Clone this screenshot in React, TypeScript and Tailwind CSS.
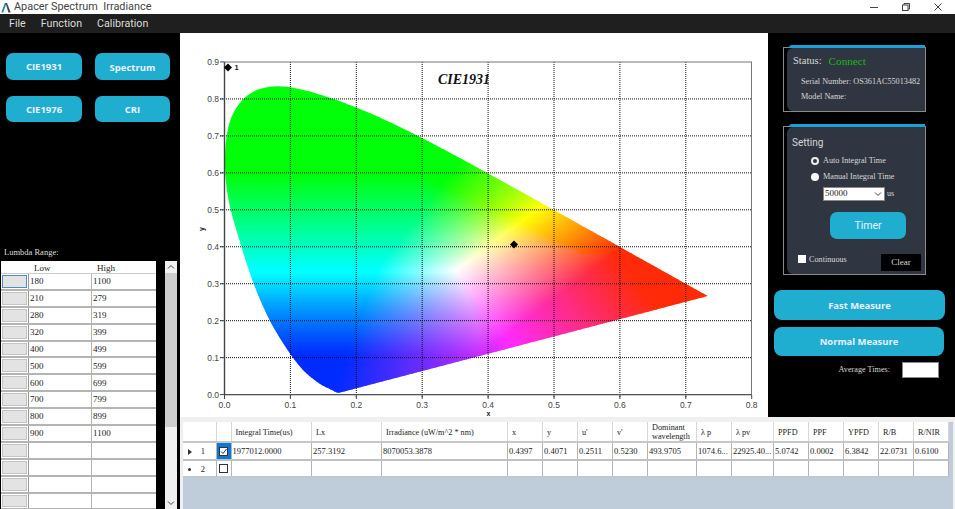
import React, { useMemo } from 'react';

const KNOTS: [number, number][] = [
  [0.1741, 0.005], [0.1714, 0.0051], [0.1644, 0.0109], [0.1566, 0.0177], [0.144, 0.0297],
  [0.1241, 0.0578], [0.1096, 0.0868], [0.0913, 0.1327], [0.0687, 0.2007], [0.0454, 0.295], [0.0235, 0.4127],
  [0.005, 0.5384], [0.001, 0.6548], [0.0105, 0.7502], [0.0369, 0.812], [0.0743, 0.8338], [0.1142, 0.8262],
  [0.1547, 0.8059], [0.1929, 0.7816], [0.2296, 0.7543], [0.2658, 0.7243], [0.3016, 0.6923], [0.3373, 0.6589],
  [0.3731, 0.6245], [0.4087, 0.5896], [0.4441, 0.5547], [0.4788, 0.5202], [0.5125, 0.4866], [0.5448, 0.4544],
  [0.5752, 0.4242], [0.6029, 0.3965], [0.627, 0.3725], [0.6658, 0.334], [0.6915, 0.3083], [0.7079, 0.292],
  [0.719, 0.2809], [0.726, 0.274], [0.7334, 0.2666],
];

// catmull-rom through the spectral locus so the edge has no corners
const smooth = (pts: [number, number][]) => {
  const out: [number, number][] = [];
  for (let i = 0; i < pts.length - 1; i++) {
    const p0 = pts[Math.max(i - 1, 0)];
    const p1 = pts[i];
    const p2 = pts[i + 1];
    const p3 = pts[Math.min(i + 2, pts.length - 1)];
    for (let k = 0; k < 6; k++) {
      const t = k / 6;
      const f = (a: number, b: number, c: number, d: number) =>
        0.5 * (2 * b + (c - a) * t + (2 * a - 5 * b + 4 * c - d) * t * t + (3 * b - a - 3 * c + d) * t * t * t);
      out.push([f(p0[0], p1[0], p2[0], p3[0]), f(p0[1], p1[1], p2[1], p3[1])]);
    }
  }
  out.push(pts[pts.length - 1]);
  return out;
};

const LOCUS = smooth(KNOTS);

// plot coordinates inside the chart svg
const px = (x: number) => 44.5 + x * 659;
const py = (y: number) => 361.6 - y * 369.6;

const clamp = (v: number, lo = 0, hi = 1) => Math.min(hi, Math.max(lo, v));

// colour fitted by eye against the chart: white near (0.352, 0.337), bands to cyan, yellow and magenta
const xyToColor = (x: number, y: number) => {
  const dx = x - 0.352;
  const dy = y - 0.337;

  const x0 = y < 0.337 ? 0.17 + (y - 0.03) * 0.2 : 0.231 + dy * 0.42;
  const x1 = y < 0.337 ? 0.352 - dy * 0.41 : 0.352 + dy * 0.75;
  const r = clamp((x - x0) / (x1 - x0));

  const gy = y < 0.33 ? Math.pow(clamp((y - 0.03) / 0.3), 1.3) : 1;
  const gp = 1 - (dx * 0.8 - dy * 0.6) * 5;
  const g = clamp(Math.min(gy, gp), 0.17);

  const h = Math.max(0.05, x > 0.3 ? 0.27 - (x - 0.3) * 0.9 : 0.27);
  const bUp = y > 0.337 ? 1 - dy / h : 1;
  const bRight = 1 - (dx * 0.926 + dy * 0.377) / 0.25;
  const b = clamp(Math.min(bUp, bRight), 0.03);

  return `rgb(${Math.round(r * 255)},${Math.round(g * 255)},${Math.round(b * 255)})`;
};

const inside = (x: number, y: number) => {
  let hit = false;
  for (let i = 0, j = LOCUS.length - 1; i < LOCUS.length; j = i++) {
    const [xi, yi] = LOCUS[i];
    const [xj, yj] = LOCUS[j];
    if (yi > y !== yj > y && x < ((xj - xi) * (y - yi)) / (yj - yi) + xi) hit = !hit;
  }
  return hit;
};

const Gamut = () => {
  const cells = useMemo(() => {
    const out: { x: number; y: number; w: number; fill: string }[] = [];
    const step = 2;
    for (let sy = 50; sy < 364; sy += step) {
      let run: { x: number; y: number; w: number; fill: string } | null = null;
      for (let sx = 44; sx < 536; sx += step) {
        const x = (sx + 1 - 44.5) / 659;
        const y = (361.6 - sy - 1) / 369.6;
        const near =
          inside(x, y) || inside(x + 0.005, y) || inside(x - 0.005, y) || inside(x, y + 0.006) || inside(x, y - 0.006);
        if (!near) {
          run = null;
          continue;
        }
        const fill = xyToColor(x, y);
        if (run && run.fill === fill) {
          run.w += step;
        } else {
          run = { x: sx, y: sy, w: step, fill };
          out.push(run);
        }
      }
    }
    return out;
  }, []);

  return (
    <g clipPath="url(#locus)">
      {cells.map((c, i) => (
        <rect key={i} x={c.x} y={c.y} width={c.w + 0.5} height={2.5} fill={c.fill} />
      ))}
    </g>
  );
};

const Diamond = ({ x, y }: { x: number; y: number }) => (
  <polygon points={`${x},${y - 4} ${x + 4},${y} ${x},${y + 4} ${x - 4},${y}`} fill="#000" />
);

const Chart = () => {
  const locus = LOCUS.map(([x, y]) => `${px(x)},${py(y)}`).join(' ');
  const xs = [0, 1, 2, 3, 4, 5, 6, 7, 8];
  const ys = [0, 1, 2, 3, 4, 5, 6, 7, 8, 9];
  return (
    <svg width="588" height="384" viewBox="0 0 588 384" className="block">
      <defs>
        <clipPath id="locus">
          <polygon points={locus} />
        </clipPath>
      </defs>
      <Gamut />
      {xs.slice(1, 8).map((i) => (
        <line key={i} x1={px(i / 10)} x2={px(i / 10)} y1={29} y2={365} stroke="#111" strokeDasharray="1 1" />
      ))}
      {ys.slice(1, 9).map((i) => (
        <line key={i} x1={40} x2={571} y1={py(i / 10)} y2={py(i / 10)} stroke="#111" strokeDasharray="1 1" />
      ))}
      <rect x={44.5} y={29} width={527} height={332.6} fill="none" stroke="#777" />
      <line x1={44.5} x2={44.5} y1={29} y2={362} stroke="#444" strokeWidth={1.4} />
      <line x1={44.5} x2={571.5} y1={361.6} y2={361.6} stroke="#555" strokeWidth={1.2} />
      {ys.map((i) => (
        <g key={i}>
          <line x1={40} x2={44} y1={py(i / 10)} y2={py(i / 10)} stroke="#444" />
          <text x={39} y={py(i / 10) + 3} textAnchor="end" fontSize="8.5" fill="#444" fontFamily="Liberation Sans, sans-serif">
            {(i / 10).toFixed(1)}
          </text>
        </g>
      ))}
      {xs.map((i) => (
        <g key={i}>
          <line x1={px(i / 10)} x2={px(i / 10)} y1={362} y2={366} stroke="#444" />
          <text x={px(i / 10)} y={375} textAnchor="middle" fontSize="8.5" fill="#444" fontFamily="Liberation Sans, sans-serif">
            {(i / 10).toFixed(1)}
          </text>
        </g>
      ))}
      <text
        transform="translate(24 196) rotate(-90)"
        textAnchor="middle"
        fontSize="7"
        fontWeight="700"
        fill="#222"
        fontFamily="Liberation Sans, sans-serif"
      >
        y
      </text>
      <text x={308.5} y={383} textAnchor="middle" fontSize="7" fontWeight="700" fill="#222" fontFamily="Liberation Sans, sans-serif">
        x
      </text>
      <text
        x={258}
        y={51}
        fontSize="14"
        fontWeight="700"
        fontStyle="italic"
        fill="#111"
        fontFamily="Liberation Serif, serif"
      >
        CIE1931
      </text>
      <Diamond x={48} y={34.5} />
      <text x={54.5} y={37} fontSize="7.5" fontWeight="700" fill="#222" fontFamily="Liberation Sans, sans-serif">
        1
      </text>
      <Diamond x={334} y={211.5} />
    </svg>
  );
};

const TitleBar = () => (
  <div className="flex h-[14px] items-center bg-white pl-[1px] text-[#444]">
    <svg width="10" height="11" viewBox="0 0 10 11">
      <path d="M0.3 10.5 L3.8 1 L5.6 1 L2.2 10.5 Z" fill="#2b8c96" />
      <path d="M4.6 1 L6 1 L9.7 10.5 L7.4 10.5 Z" fill="#33484f" />
    </svg>
    <span className="ml-[3px] whitespace-pre font-['Roboto',sans-serif] text-[10.9px] leading-none">
      Apacer Spectrum  Irradiance
    </span>
    <div className="ml-auto flex items-center gap-[24px] pr-[13px]">
      <svg width="8" height="8" viewBox="0 0 8 8">
        <line x1="0" x2="8" y1="4.5" y2="4.5" stroke="#444" />
      </svg>
      <svg width="8" height="8" viewBox="0 0 8 8" fill="none" stroke="#444">
        <rect x="0.5" y="2" width="5.5" height="5.5" />
        <path d="M2 2 V0.5 H7.5 V6 H6" />
      </svg>
      <svg width="8" height="8" viewBox="0 0 8 8" stroke="#444">
        <line x1="0.5" y1="0.5" x2="7.5" y2="7.5" />
        <line x1="7.5" y1="0.5" x2="0.5" y2="7.5" />
      </svg>
    </div>
  </div>
);

const MenuBar = () => (
  <div className="flex h-[19px] items-center gap-[15px] bg-[#1f1f1f] pl-[9px] pt-[1px] font-['Roboto',sans-serif] text-[10.7px] text-[#dcdcdc]">
    <span>File</span>
    <span>Function</span>
    <span>Calibration</span>
  </div>
);

const RANGES = [
  ['180', '1100'], ['210', '279'], ['280', '319'], ['320', '399'], ['400', '499'], ['500', '599'], ['600', '699'],
  ['700', '799'], ['800', '899'], ['900', '1100'], ['', ''], ['', ''], ['', ''], ['', ''], ['', ''],
];

const LeftPanel = () => (
  <div className="flex h-full w-[180px] flex-col bg-black">
    <div className="grid grid-cols-[76px_75px] grid-rows-[27px_26px] gap-x-[13px] gap-y-[16px] pl-[6px] pt-[20px] font-['Open_Sans',sans-serif] text-[9.5px] font-bold text-[#eef]">
      <button className="rounded-[7px] bg-[#20aed0] pt-[2px]">CIE1931</button>
      <button className="rounded-[7px] bg-[#20aed0] pt-[3px]">Spectrum</button>
      <button className="rounded-[7px] bg-[#20aed0] pt-[2px]">CIE1976</button>
      <button className="rounded-[7px] bg-[#20aed0] pt-[2px]">CRI</button>
    </div>
    <div className="mt-[125px] pl-[4px] font-['Liberation_Serif',serif] text-[8.5px] leading-[10px] text-[#ddd]">Lumbda Range:</div>
    <div className="ml-[1px] mt-[4px] flex min-h-0 flex-1 overflow-hidden">
      <div className="w-[155px] overflow-hidden bg-white font-['Liberation_Serif',serif] text-[9px] text-[#222]">
        <div className="grid h-[13px] grid-cols-[28px_63px_63px] items-center border-b border-[#ccc] pt-[1px]">
          <span />
          <span className="pl-[5px]">Low</span>
          <span className="pl-[5px]">High</span>
        </div>
        {RANGES.map((r, i) => (
          <div key={i} className="grid h-[16.9px] grid-cols-[28px_63px_63px] border-b-2 border-[#b4b4b4]">
            <span className="flex border-r border-[#999] bg-white p-[1px]">
              <span className={i === 0 ? 'flex-1 border border-[#4a8fc8] bg-[#e3e3e3]' : 'flex-1 border border-[#c4c4c4] bg-[#e3e3e3]'} />
            </span>
            <span className="flex items-center border-r border-[#b4b4b4] pl-[1px] pt-[1px]">{r[0]}</span>
            <span className="flex items-center pl-[1px] pt-[1px]">{r[1]}</span>
          </div>
        ))}
      </div>
      <div className="ml-[9px] flex h-full w-[12px] flex-col items-center bg-[#f0f0f0]">
        <svg className="my-[3px] shrink-0" width="8" height="6" viewBox="0 0 8 6" fill="none" stroke="#444">
          <path d="M1 4.5 L4 1.5 L7 4.5" />
        </svg>
        <div className="h-[154px] w-full bg-[#cdcdcd]" />
        <svg className="mb-[3px] mt-auto shrink-0" width="8" height="6" viewBox="0 0 8 6" fill="none" stroke="#444">
          <path d="M1 1.5 L4 4.5 L7 1.5" />
        </svg>
      </div>
    </div>
  </div>
);

const RightPanel = () => (
  <div className="flex h-full w-[187px] flex-col bg-black font-['Liberation_Serif',serif] text-[#d8d8d8]">
    <div className="ml-[15px] mt-[14px] h-[65px] w-[143px] border border-[#8a8a8a]">
      <div className="ml-[5px] -mt-[3px] h-[3px] rounded-tl-[3px] bg-[#1a9fd8]" />
      <div className="ml-[3px] h-[63px] rounded-l-[6px] bg-[#2f3641] pl-[6px] pt-[6px]">
        <div className="flex h-[14px] items-center text-[10.5px]">
          <span>Status:</span>
          <span className="ml-[7px] text-[11.2px] text-[#16b816]">Connect</span>
        </div>
        <div className="ml-[8px] mt-[8px] whitespace-nowrap text-[8.2px] leading-[11px]">Serial Number: OS361AC55013482</div>
        <div className="ml-[8px] mt-[4px] text-[8.2px] leading-[11px]">Model Name:</div>
      </div>
    </div>
    <div className="ml-[15px] mt-[14px] h-[149px] w-[143px] border border-[#8a8a8a]">
      <div className="ml-[5px] -mt-[3px] h-[3px] rounded-tl-[3px] bg-[#1a9fd8]" />
      <div className="ml-[3px] h-[147px] rounded-l-[6px] bg-[#2f3641] pt-[9px]">
        <div className="pl-[5px] font-['Roboto',sans-serif] text-[10px] leading-[13px]">Setting</div>
        <div className="ml-[24px] mt-[6px] flex h-[12px] items-center text-[8.2px]">
          <span className="h-[8px] w-[8px] rounded-full border-2 border-[#eee] bg-[#2f3641]" />
          <span className="ml-[4px]">Auto Integral Time</span>
        </div>
        <div className="ml-[24px] mt-[4px] flex h-[12px] items-center text-[8.2px]">
          <span className="h-[8px] w-[8px] rounded-full bg-white" />
          <span className="ml-[4px]">Manual Integral Time</span>
        </div>
        <div className="ml-[36px] mt-[4px] flex h-[14px] items-center">
          <div className="flex h-[14px] w-[62px] items-center justify-between border border-[#888] bg-white pl-[1px] pr-[2px] text-[9px] text-[#222]">
            50000
            <svg width="8" height="6" viewBox="0 0 8 6" fill="none" stroke="#444">
              <path d="M1 1.5 L4 4.5 L7 1.5" />
            </svg>
          </div>
          <span className="ml-[2px] text-[8px]">us</span>
        </div>
        <button className="ml-[43px] mt-[11px] block h-[27px] w-[76px] rounded-[7px] bg-[#20aed0] font-['Roboto',sans-serif] text-[10.5px] text-[#e8f6fa]">
          Timer
        </button>
        <div className="mt-[15px] flex items-start">
          <span className="ml-[11px] mt-[1px] h-[8px] w-[8px] bg-white" />
          <span className="ml-[3px] mt-[1px] text-[8.2px] leading-[10px]">Continuous</span>
          <span className="ml-auto mr-[4px] flex h-[17px] w-[40px] items-center justify-center bg-black text-[9px]">Clear</span>
        </div>
      </div>
    </div>
    <button className="ml-[6px] mt-[15px] h-[30px] w-[171px] shrink-0 rounded-[8px] bg-[#20aed0] pt-[2px] font-['Open_Sans',sans-serif] text-[9.4px] font-bold text-[#eef]">
      Fast Measure
    </button>
    <button className="ml-[6px] mt-[7px] h-[29px] w-[170px] shrink-0 rounded-[8px] bg-[#20aed0] pt-[2px] font-['Open_Sans',sans-serif] text-[9.4px] font-bold text-[#eef]">
      Normal Measure
    </button>
    <div className="mt-[6px] flex items-center justify-end pr-[16px]">
      <span className="text-[8.2px]">Average Times:</span>
      <span className="ml-[12px] h-[16px] w-[37px] border border-[#888] bg-white" />
    </div>
  </div>
);

const HEADERS = [
  'Integral Time(us)', 'Lx', 'Irradiance (uW/m^2 * nm)', 'x', 'y', "u'", "v'", 'Dominant wavelength', 'λ p', 'λ pv',
  'PPFD', 'PPF', 'YPFD', 'R/B', 'R/NIR',
];

const VALUES = [
  '1977012.0000', '257.3192', '8070053.3878', '0.4397', '0.4071', '0.2511', '0.5230', '493.9705', '1074.6...',
  '22925.40...', '5.0742', '0.0002', '6.3842', '22.0731', '0.6100',
];

const GRID_COLS =
  'grid grid-cols-[34px_14.5px_80.5px_70px_126px_35px_35px_35px_35px_49px_35px_42px_35px_35px_35px_35px_35px_35px]';

const ResultTable = () => (
  <div className="h-[92px] bg-[#f0f0f0] pl-[3px] pr-[2px] pt-[5px]">
    <div className="h-full bg-[#bfccd9] font-['Liberation_Serif',serif] text-[8.5px] text-[#222]">
      <div className={`${GRID_COLS} h-[21px] w-[766px] border-b-2 border-[#c8c8c8] bg-white text-[8.2px]`}>
        <span className="border-r border-[#d8d8d8]" />
        <span className="border-r border-[#d8d8d8]" />
        {HEADERS.map((h) => (
          <span key={h} className="flex items-center border-r border-[#d8d8d8] pl-[4px] pt-[1px] leading-[9px]">
            {h}
          </span>
        ))}
      </div>
      <div className={`${GRID_COLS} h-[18px] w-[766px] border-b-2 border-[#c0c0c0] bg-white`}>
        <span className="flex items-center justify-between border-r border-[#b4b4b4] pl-[5px] pr-[11px] pt-[1px]">
          <svg width="4" height="6" viewBox="0 0 4 6">
            <path d="M0 0 L4 3 L0 6 Z" fill="#333" />
          </svg>
          1
        </span>
        <span className="flex items-center justify-center border-r border-[#b4b4b4] bg-[#0a78d7]">
          <span className="flex h-[9px] w-[9px] items-center justify-center border border-[#333] bg-white">
            <svg width="7" height="7" viewBox="0 0 7 7" fill="none" stroke="#333">
              <path d="M1 3.5 L3 5.5 L6.5 1" />
            </svg>
          </span>
        </span>
        {VALUES.map((v, i) => (
          <span key={i} className="flex items-center overflow-hidden whitespace-nowrap border-r border-[#b4b4b4] pl-[1px] pt-[1px]">
            {v}
          </span>
        ))}
      </div>
      <div className={`${GRID_COLS} h-[17px] w-[766px] border-b-2 border-[#c0c8d0] bg-white`}>
        <span className="flex items-center justify-between border-r border-[#b4b4b4] pl-[5px] pr-[11px] pt-[1px]">
          <span className="h-[3px] w-[3px] rounded-full bg-[#333]" />
          2
        </span>
        <span className="flex items-center justify-center border-r border-[#b4b4b4]">
          <span className="h-[9px] w-[9px] border border-[#333] bg-white" />
        </span>
        {VALUES.map((_, i) => (
          <span key={i} className="border-r border-[#b4b4b4]" />
        ))}
      </div>
    </div>
  </div>
);

export default function App() {
  return (
    <div className="flex h-[509px] w-[955px] flex-col overflow-hidden bg-black">
      <TitleBar />
      <MenuBar />
      <div className="flex min-h-0 flex-1">
        <LeftPanel />
        <div className="flex w-[775px] flex-col">
          <div className="flex h-[384px]">
            <div className="h-full w-[588px] bg-white">
              <Chart />
            </div>
            <RightPanel />
          </div>
          <ResultTable />
        </div>
      </div>
    </div>
  );
}
